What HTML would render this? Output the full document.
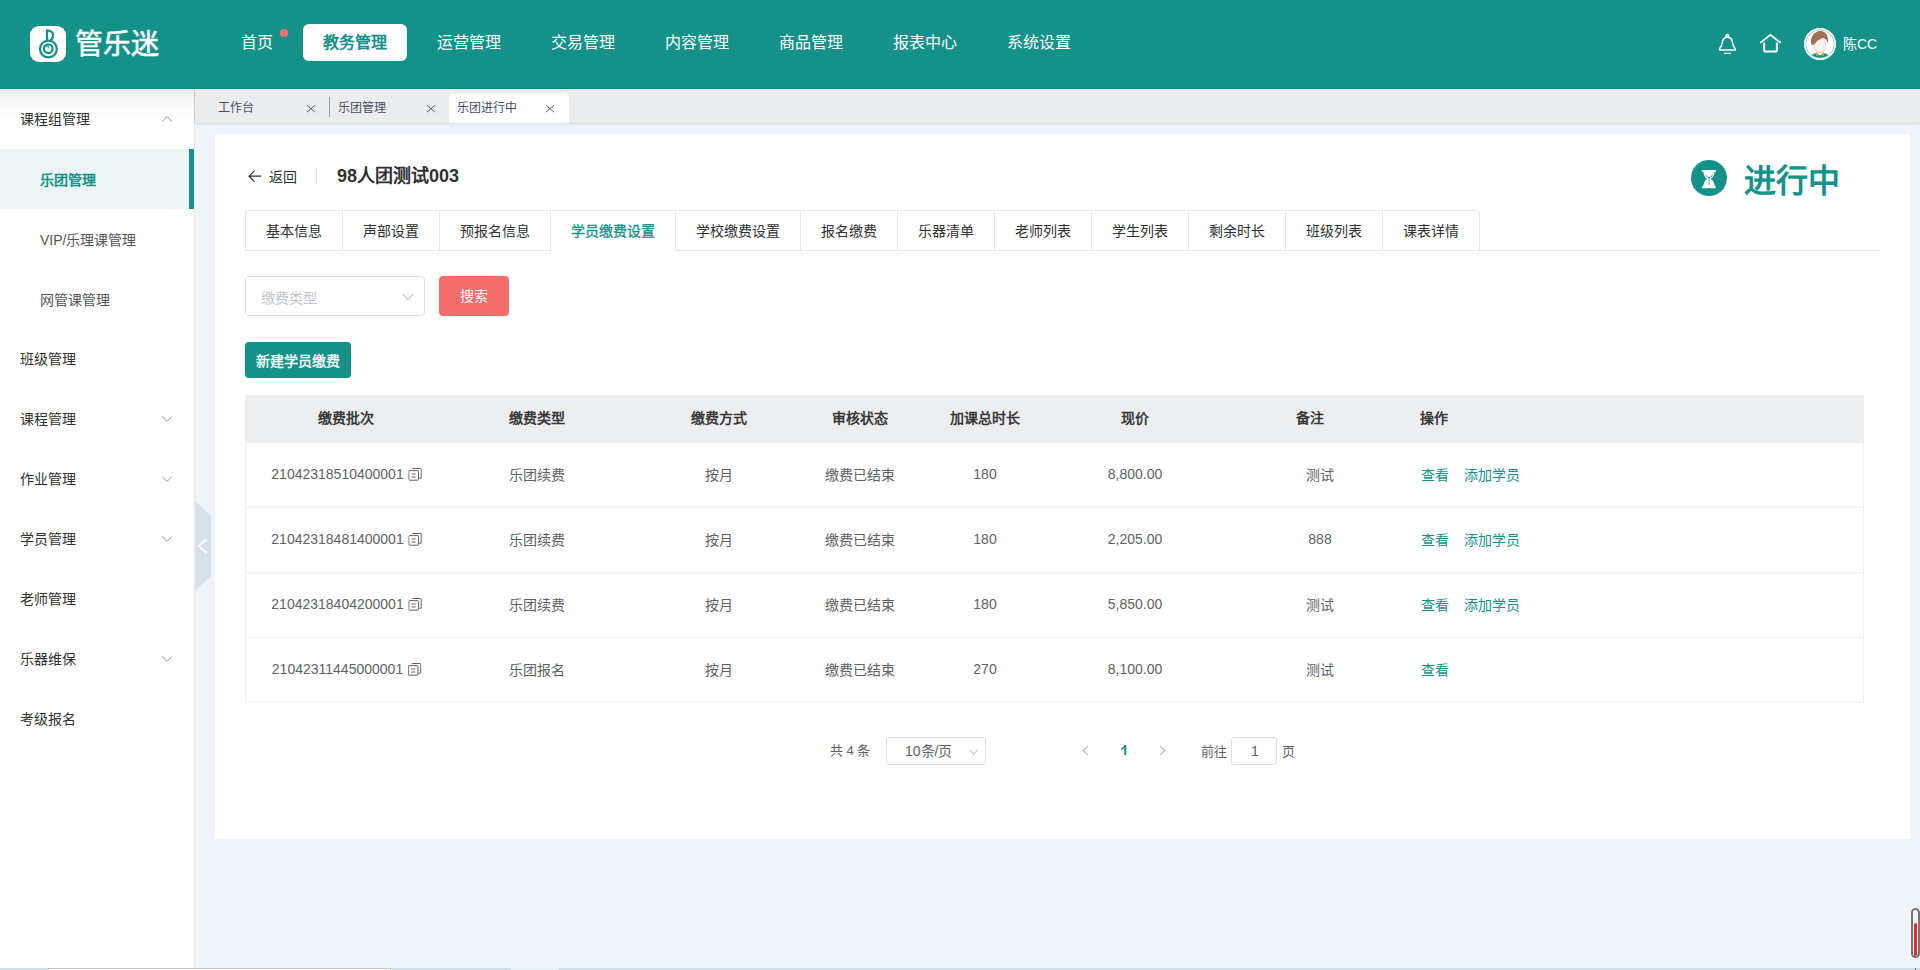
<!DOCTYPE html>
<html lang="zh-CN">
<head>
<meta charset="utf-8">
<title>管乐迷</title>
<style>
*{box-sizing:border-box;margin:0;padding:0}
html,body{width:1920px;height:970px;overflow:hidden}
body{font-family:"Liberation Sans",sans-serif;font-size:14px;color:#303133;background:#eff3fa;position:relative}
.abs{position:absolute}
/* header */
#hdr{position:absolute;left:0;top:0;width:1920px;height:89px;background:#14928a;box-shadow:inset 0 -1px 0 #108580;z-index:5}
#logo{position:absolute;left:30px;top:26px;width:36px;height:36px;background:#fff;border-radius:9px}
#logotxt{position:absolute;left:75px;top:24px;font-size:28px;line-height:42px;color:#fff;font-weight:400;-webkit-text-stroke:0.55px #fff;letter-spacing:0px;white-space:nowrap}
#nav{position:absolute;left:221px;top:24px;height:37px;white-space:nowrap;font-size:0}
#nav span{display:inline-block;height:37px;line-height:38px;padding:0 20px;margin-right:10px;font-size:16px;color:#fff;border-radius:6px;vertical-align:top}
#nav span.on{background:#fff;color:#14928a;font-weight:bold}
#dot{position:absolute;left:280px;top:29px;width:8px;height:8px;border-radius:50%;background:#f56c6c}
#uname{position:absolute;left:1843px;top:34px;font-size:14px;line-height:20px;color:#fff;white-space:nowrap}
#avatar{position:absolute;left:1804px;top:28px;width:32px;height:32px;border-radius:50%;background:#fff;overflow:hidden}
/* sidebar */
#side{position:absolute;left:0;top:89px;width:195px;height:881px;background:linear-gradient(#ebebeb,#f5f5f5 9px,#fbfbfb 19px,#fff 28px);border-right:1px solid #e9e9eb;z-index:3}
.mi{position:absolute;left:20px;font-size:14px;line-height:20px;color:#303133;white-space:nowrap}
.si{position:absolute;left:40px;font-size:14px;line-height:20px;color:#555;white-space:nowrap}
.arr{position:absolute;left:161px;width:12px;height:12px}
#act{position:absolute;left:0;top:60px;width:194px;height:60px;background:#edf4f4;border-right:5px solid #14928a}
/* tabs bar */
#tbar{position:absolute;left:194px;top:89px;width:1726px;height:34px;background:#ecedef;box-shadow:0 1px 2px rgba(0,0,0,.12)}
.tt{position:absolute;top:10px;font-size:12px;line-height:18px;color:#495060;white-space:nowrap}
.tx{position:absolute;top:15px;width:9px;height:9px}
/* card */
#card{position:absolute;left:215px;top:134px;width:1695px;height:705px;background:#fff}

/* card content (coords relative to card: x-215, y-134) */
#back{position:absolute;left:54px;top:33px;font-size:14px;line-height:20px;color:#303133;white-space:nowrap}
#vdiv{position:absolute;left:101px;top:34px;width:1px;height:16px;background:#dcdfe6}
#title{position:absolute;left:122px;top:29px;font-size:18px;line-height:26px;font-weight:bold;color:#303133;white-space:nowrap}
#sticon{position:absolute;left:1476px;top:26px;width:36px;height:36px;border-radius:50%;background:#14928a}
#sttxt{position:absolute;left:1529px;top:24px;font-size:32px;line-height:46px;font-weight:bold;color:#14928a;white-space:nowrap}
#tabs{position:absolute;left:30px;top:76px;height:41px;width:1635px;border-bottom:1px solid #e4e7ed}
#tabs .row{position:absolute;left:0;top:0;height:41px;border:1px solid #e4e7ed;border-bottom:none;border-radius:4px 4px 0 0;white-space:nowrap;font-size:0}
#tabs .row span{display:inline-block;height:40px;line-height:41px;padding:0 20px;font-size:14px;color:#303133;border-left:1px solid #e4e7ed;vertical-align:top}
#tabs .row span:first-child{border-left:none}
#tabs .row span.on{color:#14928a;background:#fff;height:41px;-webkit-text-stroke:0.3px #14928a}
#sel{position:absolute;left:30px;top:142px;width:180px;height:40px;border:1px solid #dcdfe6;border-radius:4px;background:#fff}
#sel div{position:absolute;left:15px;top:11px;font-size:14px;line-height:20px;color:#c0c4cc}
#btns{position:absolute;left:224px;top:142px;width:70px;height:40px;border-radius:4px;background:#f56c6c;color:#fff;font-size:14px;line-height:40px;text-align:center}
#btnn{position:absolute;left:30px;top:208px;width:106px;height:36px;border-radius:4px;background:#14928a;color:#fff;font-size:14px;line-height:38px;text-align:center;-webkit-text-stroke:0.35px #fff}
#tbl{position:absolute;left:30px;top:261px;width:1619px;height:308px;border-left:1px solid #ebeef5;border-right:1px solid #ebeef5}
#th{position:absolute;left:-1px;top:0;width:1618px;height:48px;background:#edeef0}
.tr{position:absolute;left:0;width:1617px;height:65px;border-bottom:1px solid #ebeef5}
.c{position:absolute;transform:translateX(-50%);white-space:nowrap;font-size:14px;line-height:20px;color:#606266}
.h{position:absolute;transform:translateX(-50%);white-space:nowrap;font-size:14px;line-height:20px;color:#3a3a3a;font-weight:bold;top:13px}
.l{position:absolute;white-space:nowrap;font-size:14px;line-height:20px;color:#14928a}
/* pagination */
.pg{position:absolute;font-size:13px;line-height:20px;color:#606266;white-space:nowrap}
.box{position:absolute;height:28px;border:1px solid #dcdfe6;border-radius:3px;background:#fff}
</style>
</head>
<body>
<div id="hdr">
  <div id="logo"><svg width="36" height="36" viewBox="0 0 36 36" style="display:block"><g fill="none" stroke="#14928a" stroke-width="2.3"><circle cx="18.4" cy="23" r="8.4"/><circle cx="18.3" cy="22.7" r="4.3"/><path d="M17 14.6V4.3C21.8 4.5 24.2 7.6 22.9 11C22.4 12.6 21.6 13.6 20.4 14.5" stroke-linejoin="round"/></g><path d="M15.6 21.6A1.9 1.9 0 1 1 18.6 23.2A2.6 2.6 0 0 0 17.6 20.4Z" fill="#14928a"/></svg></div>
  <div id="logotxt">管乐迷</div>
  <div id="nav"><span>首页</span><span class="on">教务管理</span><span>运营管理</span><span>交易管理</span><span>内容管理</span><span>商品管理</span><span>报表中心</span><span>系统设置</span></div>
  <div id="dot"></div>
  <svg class="abs" style="left:1717px;top:33px" width="22" height="22" viewBox="0 0 22 22"><g fill="none" stroke="#fff" stroke-width="1.5" stroke-linejoin="round"><circle cx="10.4" cy="2.7" r="1.3"/><path d="M3.2 17.1C2.3 17.1 2.1 16.4 2.6 15.8C4.1 13.8 5 12 5.3 9.5C5.7 6 7.6 4.3 10.4 4.3C13.2 4.3 15.1 6 15.5 9.5C15.8 12 16.7 13.8 18.2 15.8C18.7 16.4 18.5 17.1 17.6 17.1Z"/><path d="M7 20.4H14" stroke-width="1.3"/></g></svg>
  <svg class="abs" style="left:1758px;top:32px" width="24" height="22" viewBox="0 0 24 22"><g fill="none" stroke="#fff" stroke-linecap="round" stroke-linejoin="miter"><path d="M2.2 10.9L12.4 2.8L22.8 10.9" stroke-width="1.8" stroke-linecap="butt"/><path d="M6.2 10.6V18Q6.2 19.6 7.8 19.6H17.3Q18.9 19.6 18.9 18V10.6" stroke-width="2" stroke-linecap="butt"/></g></svg>
  <div id="avatar"><svg width="32" height="32" viewBox="0 0 32 32" style="display:block"><defs><clipPath id="avc"><circle cx="16" cy="16" r="13.9"/></clipPath></defs><circle cx="16" cy="16" r="16" fill="#fff"/><g clip-path="url(#avc)"><path d="M4 32C5 27 8.5 26.2 12.4 25L19.6 25C23.5 26.2 27 27 28 32Z" fill="#14928a"/><path d="M12.9 21.5H19.1V25.6L16 27.6L12.9 25.6Z" fill="#fbe9e6"/><path d="M12.3 23.8L14.4 27.6L12.4 27.9L11.6 25.2Z M19.7 23.8L17.6 27.6L19.6 27.9L20.4 25.2Z" fill="#d9a514"/><ellipse cx="16.1" cy="17.4" rx="5.9" ry="7.1" fill="#fdf1ef" stroke="#b98e80" stroke-width="0.4"/><ellipse cx="9.9" cy="17.6" rx="1" ry="1.6" fill="#fdf1ef"/><ellipse cx="22.3" cy="17.6" rx="1" ry="1.6" fill="#fdf1ef"/><path d="M7.4 16.2C5.6 9.5 9.8 3.2 16.4 3C21.6 3 25.6 8.4 23.5 15.6C23.2 12.2 21.6 11 18.9 9.8C16.4 11.2 13 12.4 11 15.4C10 17 8.4 17.2 7.4 16.2Z" fill="#a0705a"/></g><circle cx="16" cy="16" r="14.2" fill="none" stroke="#7cc4be" stroke-width="0.7"/></svg></div>
  <div id="uname">陈CC</div>
</div>
<div id="side">
  <div class="abs" style="left:194px;top:0;width:1px;height:34px;background:#cbcbcd"></div>
  <div id="act"></div>
  <svg class="arr" style="top:24px" viewBox="0 0 12 12"><path d="M1.1 8.5L6 3.6L10.9 8.5" fill="none" stroke="#909399" stroke-width="1"/></svg>
  <svg class="arr" style="top:323.75px" viewBox="0 0 12 12"><path d="M1.1 3.5L6 8.4L10.9 3.5" fill="none" stroke="#909399" stroke-width="1"/></svg>
  <svg class="arr" style="top:383.75px" viewBox="0 0 12 12"><path d="M1.1 3.5L6 8.4L10.9 3.5" fill="none" stroke="#909399" stroke-width="1"/></svg>
  <svg class="arr" style="top:443.75px" viewBox="0 0 12 12"><path d="M1.1 3.5L6 8.4L10.9 3.5" fill="none" stroke="#909399" stroke-width="1"/></svg>
  <svg class="arr" style="top:563.75px" viewBox="0 0 12 12"><path d="M1.1 3.5L6 8.4L10.9 3.5" fill="none" stroke="#909399" stroke-width="1"/></svg>
  <div class="mi" style="top:20px">课程组管理</div>
  <div class="si" style="top:81px;color:#14928a;font-weight:bold">乐团管理</div>
  <div class="si" style="top:141px">VIP/乐理课管理</div>
  <div class="si" style="top:201px">网管课管理</div>
  <div class="mi" style="top:260px">班级管理</div>
  <div class="mi" style="top:320px">课程管理</div>
  <div class="mi" style="top:380px">作业管理</div>
  <div class="mi" style="top:440px">学员管理</div>
  <div class="mi" style="top:500px">老师管理</div>
  <div class="mi" style="top:560px">乐器维保</div>
  <div class="mi" style="top:620px">考级报名</div>
</div>
<div class="abs" style="left:195px;top:501px;width:0;height:90px;border-left:16px solid #d8e0e9;border-top:15px solid transparent;border-bottom:15px solid transparent"></div>
<svg class="abs" style="left:196px;top:538px" width="14" height="16" viewBox="0 0 14 16"><path d="M10.5 1.3L2.6 8.1L10.5 14.9" fill="none" stroke="#fff" stroke-width="1.7"/></svg>
<div id="tbar">
  <div class="tt" style="left:24px">工作台</div>
  <div class="tt" style="left:144px">乐团管理</div>
  <div class="abs" style="left:255px;top:4px;width:120px;height:30px;background:#fff;border-radius:5px 5px 0 0"></div>
  <div class="tt" style="left:263px">乐团进行中</div>
  <svg class="abs" style="left:112px;top:14px" width="10" height="10" viewBox="0 0 10 10"><path d="M0.9 2.2L9.1 9.2M9.1 2.2L0.9 9.2" fill="none" stroke="#5a6070" stroke-width="1"/></svg>
  <svg class="abs" style="left:232px;top:14px" width="10" height="10" viewBox="0 0 10 10"><path d="M0.9 2.2L9.1 9.2M9.1 2.2L0.9 9.2" fill="none" stroke="#5a6070" stroke-width="1"/></svg>
  <div class="abs" style="left:135px;top:8px;width:1px;height:20px;background:#9a9da3"></div>
  <svg class="abs" style="left:351px;top:14px" width="10" height="10" viewBox="0 0 10 10"><path d="M0.9 2.2L9.1 9.2M9.1 2.2L0.9 9.2" fill="none" stroke="#5a6070" stroke-width="1"/></svg>
</div>
<div id="card">
  <svg class="abs" style="left:32.5px;top:36px" width="14" height="12" viewBox="0 0 14 12"><path d="M13.2 6.2H1.2M6.4 0.8L1 6.2L6.4 11.6" fill="none" stroke="#303133" stroke-width="1.2"/></svg>
  <div id="back">返回</div>
  <div id="vdiv"></div>
  <div id="title">98人团测试003</div>
  <div id="sticon"><svg width="36" height="36" viewBox="0 0 36 36" style="display:block"><path d="M10.9 10.1H24.9V11.9H23.5C23.4 13.5 23.2 14.6 22.8 15.6C22.2 17.2 21.2 18.2 19.9 19.1C21.4 20 22.6 21.6 23.2 23.8C23.5 25 23.8 25.8 24.2 26.5H24.9V28.2H10.9V26.5H11.8C12.2 25.8 12.5 25 12.8 23.8C13.4 21.6 14.6 20 16.1 19.1C14.8 18.2 13.8 17.2 13.2 15.6C12.8 14.6 12.6 13.5 12.5 11.9H10.9Z" fill="#fff"/><path d="M14.9 14.9C15.3 16.8 16.6 17.7 18.1 17.7C19.6 17.7 20.9 16.8 21.3 14.9" fill="none" stroke="#14928a" stroke-width="0.8"/><path d="M18.1 17.7V25.1" stroke="#14928a" stroke-width="0.7"/></svg></div>
  <div id="sttxt">进行中</div>
  <div id="tabs"><div class="row"><span>基本信息</span><span>声部设置</span><span>预报名信息</span><span class="on">学员缴费设置</span><span>学校缴费设置</span><span>报名缴费</span><span>乐器清单</span><span>老师列表</span><span>学生列表</span><span>剩余时长</span><span>班级列表</span><span>课表详情</span></div></div>
  <div id="sel"><div>缴费类型</div><svg class="abs" style="left:156px;top:16px" width="12" height="8" viewBox="0 0 12 8"><path d="M0.7 1L6 6.6L11.3 1" fill="none" stroke="#c0c4cc" stroke-width="1.1"/></svg></div>
  <div id="btns">搜索</div>
  <div id="btnn">新建学员缴费</div>
  <div id="tbl">
    <div id="th">
      <div class="h" style="left:101px">缴费批次</div>
      <div class="h" style="left:292px">缴费类型</div>
      <div class="h" style="left:474px">缴费方式</div>
      <div class="h" style="left:615px">审核状态</div>
      <div class="h" style="left:740px">加课总时长</div>
      <div class="h" style="left:890px">现价</div>
      <div class="h" style="left:1065px">备注</div>
      <div class="h" style="left:1175px;transform:none">操作</div>
    </div>
    <div class="tr" style="top:48px">
      <div class="c" style="left:101px;top:21px">21042318510400001<svg style="display:inline-block;vertical-align:top;margin:4px 0 0 5px" width="14" height="13" viewBox="0 0 14 13"><g fill="none" stroke="#606266" stroke-width="1"><rect x="0.5" y="2.6" width="9.6" height="9.6" rx="0.6"/><path d="M4 0.5H12.3Q12.9 0.5 12.9 1.1V10.2H10.6"/><path d="M3.3 6H7.4M3.3 9H7.4"/></g></svg></div>
      <div class="c" style="left:291px;top:22px">乐团续费</div>
      <div class="c" style="left:473px;top:22px">按月</div>
      <div class="c" style="left:614px;top:22px">缴费已结束</div>
      <div class="c" style="left:739px;top:21px">180</div>
      <div class="c" style="left:889px;top:21px">8,800.00</div>
      <div class="c" style="left:1074px;top:22px">测试</div>
      <div class="l" style="left:1175px;top:22px">查看</div>
      <div class="l" style="left:1218px;top:22px">添加学员</div>
    </div>
    <div class="tr" style="top:113px">
      <div class="c" style="left:101px;top:21px">21042318481400001<svg style="display:inline-block;vertical-align:top;margin:4px 0 0 5px" width="14" height="13" viewBox="0 0 14 13"><g fill="none" stroke="#606266" stroke-width="1"><rect x="0.5" y="2.6" width="9.6" height="9.6" rx="0.6"/><path d="M4 0.5H12.3Q12.9 0.5 12.9 1.1V10.2H10.6"/><path d="M3.3 6H7.4M3.3 9H7.4"/></g></svg></div>
      <div class="c" style="left:291px;top:22px">乐团续费</div>
      <div class="c" style="left:473px;top:22px">按月</div>
      <div class="c" style="left:614px;top:22px">缴费已结束</div>
      <div class="c" style="left:739px;top:21px">180</div>
      <div class="c" style="left:889px;top:21px">2,205.00</div>
      <div class="c" style="left:1074px;top:21px">888</div>
      <div class="l" style="left:1175px;top:22px">查看</div>
      <div class="l" style="left:1218px;top:22px">添加学员</div>
    </div>
    <div class="tr" style="top:178px">
      <div class="c" style="left:101px;top:21px">21042318404200001<svg style="display:inline-block;vertical-align:top;margin:4px 0 0 5px" width="14" height="13" viewBox="0 0 14 13"><g fill="none" stroke="#606266" stroke-width="1"><rect x="0.5" y="2.6" width="9.6" height="9.6" rx="0.6"/><path d="M4 0.5H12.3Q12.9 0.5 12.9 1.1V10.2H10.6"/><path d="M3.3 6H7.4M3.3 9H7.4"/></g></svg></div>
      <div class="c" style="left:291px;top:22px">乐团续费</div>
      <div class="c" style="left:473px;top:22px">按月</div>
      <div class="c" style="left:614px;top:22px">缴费已结束</div>
      <div class="c" style="left:739px;top:21px">180</div>
      <div class="c" style="left:889px;top:21px">5,850.00</div>
      <div class="c" style="left:1074px;top:22px">测试</div>
      <div class="l" style="left:1175px;top:22px">查看</div>
      <div class="l" style="left:1218px;top:22px">添加学员</div>
    </div>
    <div class="tr" style="top:243px">
      <div class="c" style="left:101px;top:21px">21042311445000001<svg style="display:inline-block;vertical-align:top;margin:4px 0 0 5px" width="14" height="13" viewBox="0 0 14 13"><g fill="none" stroke="#606266" stroke-width="1"><rect x="0.5" y="2.6" width="9.6" height="9.6" rx="0.6"/><path d="M4 0.5H12.3Q12.9 0.5 12.9 1.1V10.2H10.6"/><path d="M3.3 6H7.4M3.3 9H7.4"/></g></svg></div>
      <div class="c" style="left:291px;top:22px">乐团报名</div>
      <div class="c" style="left:473px;top:22px">按月</div>
      <div class="c" style="left:614px;top:22px">缴费已结束</div>
      <div class="c" style="left:739px;top:21px">270</div>
      <div class="c" style="left:889px;top:21px">8,100.00</div>
      <div class="c" style="left:1074px;top:22px">测试</div>
      <div class="l" style="left:1175px;top:22px">查看</div>
    </div>
  </div>
  <div class="pg" style="left:615px;top:607px">共 4 条</div>
  <div class="box" style="left:671px;top:603px;width:100px"></div>
  <div class="pg" style="left:690px;top:607px;font-size:14px">10条/页</div>
  <svg class="abs" style="left:753px;top:614px" width="12" height="8" viewBox="0 0 12 8"><path d="M1.6 1.7L5.8 6.1L10 1.7" fill="none" stroke="#c0c4cc" stroke-width="1.1"/></svg>
  <svg class="abs" style="left:865px;top:610px" width="10" height="14" viewBox="0 0 10 14"><path d="M7.8 2.2L3 6.5L7.8 10.8" fill="none" stroke="#c0c4cc" stroke-width="1.5"/></svg>
  <svg class="abs" style="left:906px;top:611px" width="6" height="10" viewBox="0 0 6 10"><path d="M3.3 0H5.3V10H3.3V3.3Q2.2 4.5 0.2 5.2V3.5Q2.5 2.5 3.3 0Z" fill="#14928a"/></svg>
  <svg class="abs" style="left:943px;top:610px" width="10" height="14" viewBox="0 0 10 14"><path d="M2.2 2.2L7 6.5L2.2 10.8" fill="none" stroke="#c0c4cc" stroke-width="1.5"/></svg>
  <div class="pg" style="left:986px;top:608px">前往</div>
  <div class="box" style="left:1016px;top:603px;width:46px"></div>
  <div class="pg" style="left:1036px;top:607px;font-size:14px">1</div>
  <div class="pg" style="left:1067px;top:608px">页</div>
</div>
<div class="abs" style="left:1911px;top:908px;width:9px;height:50px;border:2px solid #767676;border-radius:4.5px;background:#f0f4fa;z-index:9"></div>
<div class="abs" style="left:1914px;top:923px;width:3.2px;height:33px;border-radius:1.6px;background:#ee2a2a;z-index:10"></div>
<div class="abs" style="left:0;top:968px;width:1920px;height:2px;background:#cde1e6;z-index:11"></div>
<div class="abs" style="left:48px;top:968px;width:343px;height:2px;background:#fff;border-top:1px solid #c6c6c6;border-left:1px solid #c6c6c6;border-right:1px solid #c6c6c6;z-index:12"></div>
<div class="abs" style="left:511px;top:968px;width:48px;height:2px;background:#e8f1f4;z-index:12"></div>
<div class="abs" style="left:1915px;top:968px;width:1px;height:2px;background:#6a7a80;z-index:12"></div>
</body>
</html>
